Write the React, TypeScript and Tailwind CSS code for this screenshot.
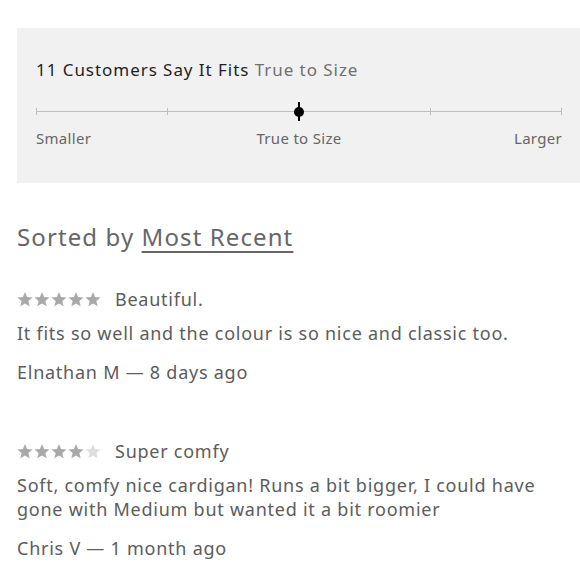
import React from "react";

const Star = ({ color }: { color: string }) => (
  <svg width="16" height="16" viewBox="0 0 24 24" className={color}>
    <path fill="currentColor" d="M12 1.5l3.1 7.6 8.2.6-6.3 5.3 2 8-7-4.4-7 4.4 2-8L.7 9.7l8.2-.6z" />
  </svg>
);

const Stars = ({ n }: { n: number }) => (
  <div className="flex gap-px">
    {[0, 1, 2, 3, 4].map((i) => (
      <Star key={i} color={i < n ? "text-[#a9a9a9]" : "text-[#dedede]"} />
    ))}
  </div>
);

const FitSlider = () => (
  <svg width="526" height="20" viewBox="0 0 526 20" className="block">
    <line x1="0" y1="9.5" x2="526" y2="9.5" stroke="#bdbdbd" strokeWidth="1" />
    {[0.5, 131.5, 394.5, 525.5].map((x) => (
      <line key={x} x1={x} y1="6" x2={x} y2="13" stroke="#bdbdbd" strokeWidth="1" />
    ))}
    <line x1="263" y1="0" x2="263" y2="19" stroke="#000" strokeWidth="2" />
    <circle cx="263" cy="10" r="5" fill="#000" />
  </svg>
);

type Review = { stars: number; title: string; body: string; author: string };

const ReviewItem = ({ r }: { r: Review }) => (
  <div className="flex flex-col text-[18px] leading-[24px] tracking-[0.75px] text-[#5c5c5c]">
    <div className="flex items-center gap-[14px] h-[20px]">
      <Stars n={r.stars} />
      <span className="leading-[20px]">{r.title}</span>
    </div>
    <p className="mt-[12px] w-[540px]">{r.body}</p>
    <p className="mt-[15px]">{r.author}</p>
  </div>
);

const reviews: Review[] = [
  {
    stars: 5,
    title: "Beautiful.",
    body: "It fits so well and the colour is so nice and classic too.",
    author: "Elnathan M — 8 days ago",
  },
  {
    stars: 4,
    title: "Super comfy",
    body: "Soft, comfy nice cardigan! Runs a bit bigger, I could have gone with Medium but wanted it a bit roomier",
    author: "Chris V — 1 month ago",
  },
];

export default function App() {
  return (
    <div
      className="w-[580px] h-[580px] overflow-hidden bg-white pt-[28px] pl-[17px] flex flex-col"
      style={{ fontFamily: "'Noto Sans', sans-serif" }}
    >
      <section className="bg-[#f1f1f1] h-[155px] px-[19px] pt-[32px] w-[563px] flex flex-col">
        <h2 className="text-[17px] leading-[20px] text-[#1f1f1f] tracking-[0.95px]">
          11 Customers Say It Fits <span className="text-[#707070]">True to Size</span>
        </h2>
        <div className="mt-[22px]">
          <FitSlider />
        </div>
        <div className="mt-[6px] w-[526px] grid grid-cols-3 text-[15px] leading-[20px] text-[#666] tracking-[0.3px]">
          <span className="text-left">Smaller</span>
          <span className="text-center">True to Size</span>
          <span className="text-right">Larger</span>
        </div>
      </section>

      <div className="mt-[39px] text-[24px] leading-[30px] text-[#666] tracking-[1.1px]">
        Sorted by <span className="underline underline-offset-[5px] decoration-[1.5px]">Most Recent</span>
      </div>

      <div className="mt-[37px] flex flex-col gap-[57px]">
        {reviews.map((r) => (
          <ReviewItem key={r.author} r={r} />
        ))}
      </div>
    </div>
  );
}
